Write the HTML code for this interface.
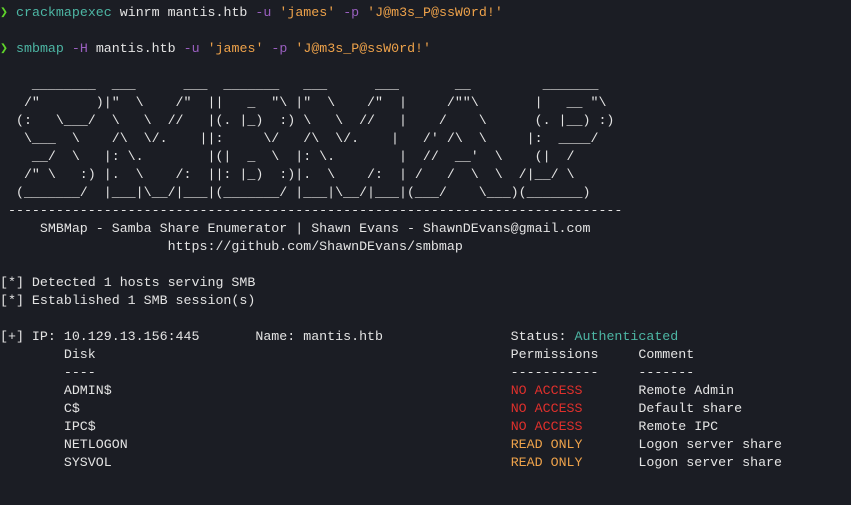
<!DOCTYPE html>
<html><head><meta charset="utf-8"><style>
html,body{margin:0;padding:0;background:#1b1d24;width:851px;height:505px;overflow:hidden}
pre{margin:0;padding:4px 0 0 0;font-family:"Liberation Mono",monospace;font-size:13.3px;line-height:18px;color:#e4e4e4;white-space:pre}
.g{color:#5fd42a;font-weight:bold}.t{color:#4db6a4}.p{color:#9a5fc0}.o{color:#eea24a}.r{color:#e0302c}
</style></head><body><pre><span class="g">❯</span> <span class="t">crackmapexec</span> winrm mantis.htb <span class="p">-u</span> <span class="o">'james'</span> <span class="p">-p</span> <span class="o">'J@m3s_P@ssW0rd!'</span>

<span class="g">❯</span> <span class="t">smbmap</span> <span class="p">-H</span> mantis.htb <span class="p">-u</span> <span class="o">'james'</span> <span class="p">-p</span> <span class="o">'J@m3s_P@ssW0rd!'</span>

    ________  ___      ___  _______   ___      ___       __         _______
   /"       )|"  \    /"  ||   _  "\ |"  \    /"  |     /""\       |   __ "\
  (:   \___/  \   \  //   |(. |_)  :) \   \  //   |    /    \      (. |__) :)
   \___  \    /\  \/.    ||:     \/   /\  \/.    |   /' /\  \     |:  ____/
    __/  \   |: \.        |(|  _  \  |: \.        |  //  __'  \    (|  /
   /" \   :) |.  \    /:  ||: |_)  :)|.  \    /:  | /   /  \  \  /|__/ \
  (_______/  |___|\__/|___|(_______/ |___|\__/|___|(___/    \___)(_______)
 -----------------------------------------------------------------------------
     SMBMap - Samba Share Enumerator | Shawn Evans - ShawnDEvans@gmail.com
                     https://github.com/ShawnDEvans/smbmap

[*] Detected 1 hosts serving SMB
[*] Established 1 SMB session(s)

[+] IP: 10.129.13.156:445       Name: mantis.htb                Status: <span class="t">Authenticated</span>
        Disk                                                    Permissions     Comment
        ----                                                    -----------     -------
        ADMIN$                                                  <span class="r">NO ACCESS</span>       Remote Admin
        C$                                                      <span class="r">NO ACCESS</span>       Default share
        IPC$                                                    <span class="r">NO ACCESS</span>       Remote IPC
        NETLOGON                                                <span class="o">READ ONLY</span>       Logon server share
        SYSVOL                                                  <span class="o">READ ONLY</span>       Logon server share
</pre></body></html>
